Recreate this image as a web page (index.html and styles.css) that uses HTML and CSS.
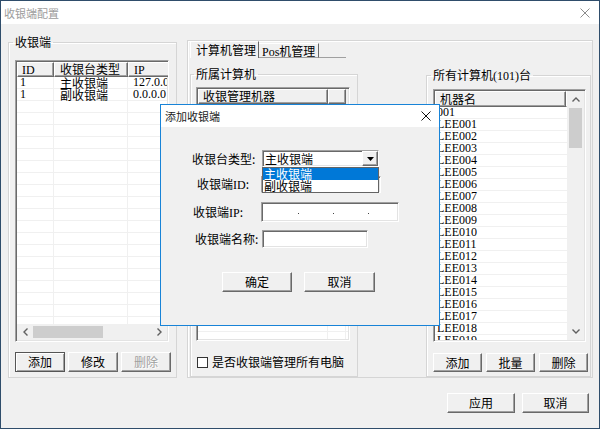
FILE: index.html
```html
<!DOCTYPE html>
<html lang="zh-CN">
<head>
<meta charset="utf-8">
<title>收银端配置</title>
<link rel="stylesheet" href="styles.css">
</head>
<body>
<div class="window">
  <div class="titlebar">
    <span class="title">收银端配置</span>
    <svg class="x-main" width="10" height="10" viewBox="0 0 10 10"><path d="M0.5 0.5L9.5 9.5M9.5 0.5L0.5 9.5" stroke="#8c8c8c" stroke-width="1" fill="none"/></svg>
  </div>
  <div class="client">
    <div class="main">
      <fieldset class="group g-left">
        <legend>收银端</legend>
        <div class="list l-left">
          <div class="lv-head">
            <div class="hc wl1"><span class="lat">ID</span></div>
            <div class="hc wl2">收银台类型</div>
            <div class="hc wl3"><span class="lat">IP</span></div>
          </div>
          <div class="lv-rows">
            <div class="r"><span class="c wl1 lat">1</span><span class="c wl2">主收银端</span><span class="c wl3 lat">127.0.0.1</span></div>
            <div class="r"><span class="c wl1 lat">1</span><span class="c wl2">副收银端</span><span class="c wl3 lat">0.0.0.0</span></div>
            <div class="r"><span class="c wl1"></span><span class="c wl2"></span><span class="c wl3"></span></div>
            <div class="r"><span class="c wl1"></span><span class="c wl2"></span><span class="c wl3"></span></div>
            <div class="r"><span class="c wl1"></span><span class="c wl2"></span><span class="c wl3"></span></div>
            <div class="r"><span class="c wl1"></span><span class="c wl2"></span><span class="c wl3"></span></div>
            <div class="r"><span class="c wl1"></span><span class="c wl2"></span><span class="c wl3"></span></div>
            <div class="r"><span class="c wl1"></span><span class="c wl2"></span><span class="c wl3"></span></div>
            <div class="r"><span class="c wl1"></span><span class="c wl2"></span><span class="c wl3"></span></div>
            <div class="r"><span class="c wl1"></span><span class="c wl2"></span><span class="c wl3"></span></div>
            <div class="r"><span class="c wl1"></span><span class="c wl2"></span><span class="c wl3"></span></div>
            <div class="r"><span class="c wl1"></span><span class="c wl2"></span><span class="c wl3"></span></div>
            <div class="r"><span class="c wl1"></span><span class="c wl2"></span><span class="c wl3"></span></div>
            <div class="r"><span class="c wl1"></span><span class="c wl2"></span><span class="c wl3"></span></div>
            <div class="r"><span class="c wl1"></span><span class="c wl2"></span><span class="c wl3"></span></div>
            <div class="r"><span class="c wl1"></span><span class="c wl2"></span><span class="c wl3"></span></div>
            <div class="r"><span class="c wl1"></span><span class="c wl2"></span><span class="c wl3"></span></div>
            <div class="r"><span class="c wl1"></span><span class="c wl2"></span><span class="c wl3"></span></div>
            <div class="r"><span class="c wl1"></span><span class="c wl2"></span><span class="c wl3"></span></div>
            <div class="r"><span class="c wl1"></span><span class="c wl2"></span><span class="c wl3"></span></div>
            <div class="r"><span class="c wl1"></span><span class="c wl2"></span><span class="c wl3"></span></div>
          </div>
          <div class="hscroll">
            <span class="sa"><svg width="5" height="8" viewBox="0 0 5 8"><path d="M4.5 0.5L1 4L4.5 7.5" stroke="#606060" stroke-width="1.4" fill="none"/></svg></span>
            <span class="hthumb"></span>
            <span class="htrack"></span>
            <span class="sa"><svg width="5" height="8" viewBox="0 0 5 8"><path d="M0.5 0.5L4 4L0.5 7.5" stroke="#606060" stroke-width="1.4" fill="none"/></svg></span>
          </div>
        </div>
        <div class="btnrow">
          <button class="btn btn-def">添加</button>
          <button class="btn">修改</button>
          <button class="btn" disabled>删除</button>
        </div>
      </fieldset>

      <div class="frame">
        <div class="tabs">
          <div class="tab tab-sel">计算机管理</div>
          <div class="tab"><span class="lat">Pos</span>机管理</div>
          <div class="tabline"></div>
        </div>
        <div class="grow">
          <fieldset class="group g-mid">
            <legend>所属计算机</legend>
            <div class="list l-mid">
              <div class="lv-head">
                <div class="hc wm1">收银管理机器</div>
                <div class="hc wm2"></div>
              </div>
              <div class="lv-rows">
                <div class="r"><span class="c wm1"></span><span class="c wm2"></span></div>
                <div class="r"><span class="c wm1"></span><span class="c wm2"></span></div>
                <div class="r"><span class="c wm1"></span><span class="c wm2"></span></div>
                <div class="r"><span class="c wm1"></span><span class="c wm2"></span></div>
                <div class="r"><span class="c wm1"></span><span class="c wm2"></span></div>
                <div class="r"><span class="c wm1"></span><span class="c wm2"></span></div>
                <div class="r"><span class="c wm1"></span><span class="c wm2"></span></div>
                <div class="r"><span class="c wm1"></span><span class="c wm2"></span></div>
                <div class="r"><span class="c wm1"></span><span class="c wm2"></span></div>
                <div class="r"><span class="c wm1"></span><span class="c wm2"></span></div>
                <div class="r"><span class="c wm1"></span><span class="c wm2"></span></div>
                <div class="r"><span class="c wm1"></span><span class="c wm2"></span></div>
                <div class="r"><span class="c wm1"></span><span class="c wm2"></span></div>
                <div class="r"><span class="c wm1"></span><span class="c wm2"></span></div>
                <div class="r"><span class="c wm1"></span><span class="c wm2"></span></div>
                <div class="r"><span class="c wm1"></span><span class="c wm2"></span></div>
                <div class="r"><span class="c wm1"></span><span class="c wm2"></span></div>
                <div class="r"><span class="c wm1"></span><span class="c wm2"></span></div>
                <div class="r"><span class="c wm1"></span><span class="c wm2"></span></div>
                <div class="r"><span class="c wm1"></span><span class="c wm2"></span></div>
              </div>
            </div>
            <label class="chk"><span class="box"></span><span>是否收银端管理所有电脑</span></label>
          </fieldset>

          <fieldset class="group g-right">
            <legend>所有计算机<span class="lat">(101)</span>台</legend>
            <div class="list l-right">
              <div class="lcol">
                <div class="lv-head">
                  <div class="hc wr1">机器名</div>
                  <div class="hc wr2"></div>
                </div>
                <div class="lv-rows">
                  <div class="r"><span class="c wr lat">001</span></div>
                  <div class="r"><span class="c wr lat">LEE001</span></div>
                  <div class="r"><span class="c wr lat">LEE002</span></div>
                  <div class="r"><span class="c wr lat">LEE003</span></div>
                  <div class="r"><span class="c wr lat">LEE004</span></div>
                  <div class="r"><span class="c wr lat">LEE005</span></div>
                  <div class="r"><span class="c wr lat">LEE006</span></div>
                  <div class="r"><span class="c wr lat">LEE007</span></div>
                  <div class="r"><span class="c wr lat">LEE008</span></div>
                  <div class="r"><span class="c wr lat">LEE009</span></div>
                  <div class="r"><span class="c wr lat">LEE010</span></div>
                  <div class="r"><span class="c wr lat">LEE011</span></div>
                  <div class="r"><span class="c wr lat">LEE012</span></div>
                  <div class="r"><span class="c wr lat">LEE013</span></div>
                  <div class="r"><span class="c wr lat">LEE014</span></div>
                  <div class="r"><span class="c wr lat">LEE015</span></div>
                  <div class="r"><span class="c wr lat">LEE016</span></div>
                  <div class="r"><span class="c wr lat">LEE017</span></div>
                  <div class="r"><span class="c wr lat">LEE018</span></div>
                  <div class="r"><span class="c wr lat">LEE019</span></div>
                </div>
              </div>
              <div class="vscroll">
                <span class="va"><svg width="8" height="5" viewBox="0 0 8 5"><path d="M0.5 4.5L4 1L7.5 4.5" stroke="#606060" stroke-width="1.4" fill="none"/></svg></span>
                <span class="vthumb"></span>
                <span class="vtrack"></span>
                <span class="va"><svg width="8" height="5" viewBox="0 0 8 5"><path d="M0.5 0.5L4 4L7.5 0.5" stroke="#606060" stroke-width="1.4" fill="none"/></svg></span>
              </div>
            </div>
            <div class="btnrow btnrow-r">
              <button class="btn">添加</button>
              <button class="btn">批量</button>
              <button class="btn">删除</button>
            </div>
          </fieldset>
        </div>
      </div>
    </div>
    <div class="footer">
      <button class="btn btn-apply">应用</button>
      <button class="btn btn-cancel">取消</button>
    </div>
  </div>

  <div class="dialog">
    <div class="dtitle">
      <span class="dtitle-text">添加收银端</span>
      <svg width="10" height="10" viewBox="0 0 10 10"><path d="M0.5 0.5L9.5 9.5M9.5 0.5L0.5 9.5" stroke="#111" stroke-width="1" fill="none"/></svg>
    </div>
    <div class="dbody">
      <div class="frow fr1">
        <span class="flabel l1">收银台类型:</span>
        <div class="combo">
          <span class="combo-text">主收银端</span>
          <span class="combo-btn"><svg width="7" height="4" viewBox="0 0 7 4"><path d="M0 0H7L3.5 4Z" fill="#000"/></svg></span>
          <div class="dropdown">
            <div class="dd-item dd-sel">主收银端</div>
            <div class="dd-item">副收银端</div>
          </div>
        </div>
      </div>
      <div class="frow fr2">
        <span class="flabel l2">收银端<span class="lat">ID</span>:</span>
        <span class="field f-id"></span>
      </div>
      <div class="frow fr3">
        <span class="flabel l3">收银端<span class="lat">IP</span>:</span>
        <span class="field f-ip"><i class="dot"></i><i class="dot"></i><i class="dot"></i></span>
      </div>
      <div class="frow fr4">
        <span class="flabel l4">收银端名称:</span>
        <span class="field f-name"></span>
      </div>
      <div class="dbtns">
        <button class="btn btn-ok">确定</button>
        <button class="btn btn-dcancel">取消</button>
      </div>
    </div>
  </div>
</div>
</body>
</html>
```

FILE: styles.css
```css
* { box-sizing: border-box; }
html, body { margin: 0; padding: 0; }
body {
  font-family: "Noto Sans CJK SC", "Noto Sans", sans-serif;
  font-size: 12px;
  line-height: 14px;
  color: #000;
  background: #fff;
}
.lat { font-family: "Liberation Serif", serif; font-size: 12px; }

.window {
  position: relative;
  width: 600px;
  height: 429px;
  border: 1px solid #2f4d6b;
  background: #f0f0f0;
  overflow: hidden;
}
.titlebar {
  height: 23px;
  background: #fff;
  display: flex;
  align-items: center;
  justify-content: space-between;
  padding: 0 9px 0 3px;
}
.title { font-size: 11px; color: #9c9c9c; }

.main { display: flex; align-items: flex-start; padding-left: 7px; }

/* group boxes */
.group {
  margin: 0;
  padding: 0;
  min-width: 0;
  border: 1px solid #d5d5d5;
  box-shadow: inset 1px 1px #fff;
}
.group legend { padding: 0 2px; margin-left: -2px; line-height: 14px; }
.g-left { width: 169px; height: 343px; margin-top: 11px; padding-left: 6px; }

/* list views */
.list {
  background: #fff;
  border: 1px solid;
  border-color: #a0a0a0 #fff #fff #a0a0a0;
  box-shadow: inset 1px 1px #696969, inset -1px -1px #e3e3e3;
  padding: 1px;
  display: flex;
  flex-direction: column;
  overflow: hidden;
}
.l-left { width: 154px; height: 282px; margin-top: 11px; }
.lv-head { display: flex; height: 15px; flex: none; background: #f0f0f0; }
.hc {
  flex: none;
  height: 15px;
  border: 1px solid;
  border-color: #fff #696969 #696969 #fff;
  box-shadow: inset -1px -1px #a0a0a0;
  background: #f0f0f0;
  padding-left: 4px;
  line-height: 12px;
  white-space: nowrap;
}
.lv-rows { flex: 1; overflow: hidden; }
.r { display: flex; height: 12px; border-bottom: 1px solid #f0f0f0; line-height: 11px; white-space: nowrap; }
.c { flex: none; border-right: 1px solid #f0f0f0; padding-left: 3px; }
.wl1 { width: 37px; }
.wl2 { width: 74px; padding-left: 5px; }
.wl3 { width: 60px; padding-left: 5px; }
.r .wl2 { padding-left: 6px; }

.hscroll { display: flex; height: 16px; flex: none; background: #f0f0f0; position: relative; }
.sa { width: 16px; flex: none; display: flex; align-items: center; justify-content: center; }
.hthumb { width: 70px; flex: none; background: #cdcdcd; margin: 2px 0; }
.htrack { flex: 1; }

/* buttons */
.btn {
  font-family: inherit;
  font-size: 12px;
  line-height: 16px;
  color: #000;
  height: 20px;
  width: 50px;
  padding: 0;
  background: #f0f0f0;
  border: 1px solid;
  border-color: #fff #696969 #696969 #fff;
  box-shadow: inset -1px -1px #a0a0a0;
}
.btn:disabled { color: #a0a0a0; text-shadow: 1px 1px #fff; }
.btn-def {
  border-color: #555;
  box-shadow: inset 1px 1px #fff, inset -1px -1px #a0a0a0;
}
.btnrow { display: flex; gap: 3px; margin-top: 10px; }

/* right frame with tabs */
.frame {
  margin-left: 10px;
  margin-top: 16px;
  width: 406px;
  height: 338px;
  border: 1px solid #d5d5d5;
  box-shadow: inset 1px 1px #fff;
}
.tabs { display: flex; align-items: flex-end; height: 17px; margin-left: 2px; }
.tab {
  height: 15px;
  width: 60px;
  padding-left: 3px;
  border-top: 1px solid #fff;
  border-right: 1px solid #696969;
  border-bottom: 1px solid #a0a0a0;
  line-height: 13px;
  white-space: nowrap;
}
.tab-sel {
  height: 17px;
  width: 69px;
  padding-left: 5px;
  border-left: 1px solid #fff;
  border-bottom: none;
  line-height: 15px;
}
.tabline { width: 27px; height: 1px; background: #a0a0a0; }

.grow { display: flex; align-items: flex-start; margin-top: 9px; margin-left: 2px; }
.g-mid { width: 168px; height: 310px; padding-left: 5px; }
.g-right { width: 165px; height: 309px; margin-top: 1px; margin-left: 68px; padding-left: 6px; }

.l-mid { width: 154px; height: 254px; margin-top: 6px; }
.wm1 { width: 130px; padding-left: 4px; }
.wm2 { width: 18px; }
.hc.wm1 { padding-left: 4px; }

.chk { display: flex; align-items: center; height: 12px; margin-top: 15px; margin-left: 1px; }
.box { width: 11px; height: 11px; border: 1px solid #333; background: #fff; margin-right: 4px; }

.l-right { width: 153px; height: 253px; margin-top: 6px; flex-direction: row; }
.lcol { flex: 1; display: flex; flex-direction: column; min-width: 0; }
.l-right .lv-head { height: 16px; }
.l-right .hc { height: 16px; line-height: 13px; }
.wr1 { width: 131px; }
.wr2 { flex: 1 !important; border-right: none !important; box-shadow: none !important; }
.wr { width: 100%; padding-left: 2px; border-right: none; }
.vscroll { width: 17px; flex: none; display: flex; flex-direction: column; background: #f0f0f0; }
.va { height: 17px; flex: none; display: flex; align-items: center; justify-content: center; }
.vthumb { height: 40px; width: 13px; margin: 0 auto; background: #cdcdcd; flex: none; }
.vtrack { flex: 1; }
.btnrow-r { margin-top: 11px; }
.btnrow-r .btn { width: 49px; height: 19px; }
.btnrow-r .btn + .btn { margin-left: 1px; }

.footer { display: flex; justify-content: flex-end; gap: 7px; margin-top: 15px; padding-right: 10px; }
.btn-apply { width: 68px; }
.btn-cancel { width: 67px; }

/* modal dialog */
.dialog {
  position: absolute;
  left: 159px;
  top: 103px;
  width: 280px;
  height: 222px;
  border: 1px solid #1883d7;
  background: #f0f0f0;
}
.dtitle {
  height: 22px;
  background: #fff;
  display: flex;
  align-items: center;
  justify-content: space-between;
  padding: 0 8px 0 4px;
}
.dtitle-text { font-size: 11px; color: #222; }
.dbody { padding-top: 23px; }
.frow { display: flex; align-items: center; }
.flabel { width: 100px; flex: none; white-space: nowrap; }
.l1 { padding-left: 31px; }
.l2 { padding-left: 36px; }
.l3 { padding-left: 32px; }
.l4 { padding-left: 34px; }
.fr2 { margin-top: 9px; }
.fr3 { margin-top: 9px; }
.fr4 { margin-top: 8px; }

.field, .combo {
  display: block;
  background: #fff;
  border: 1px solid;
  border-color: #a0a0a0 #fff #fff #a0a0a0;
  box-shadow: inset 1px 1px #696969, inset -1px -1px #e3e3e3;
}
.combo { position: relative; width: 117px; height: 17px; margin-left: 1px; display: flex; align-items: center; }
.combo-text { padding-left: 2px; flex: 1; line-height: 14px; }
.combo-btn {
  width: 16px;
  height: 15px;
  flex: none;
  background: #f0f0f0;
  border: 1px solid;
  border-color: #fff #696969 #696969 #fff;
  box-shadow: inset -1px -1px #a0a0a0;
  display: flex;
  align-items: center;
  justify-content: center;
}
.dropdown {
  position: absolute;
  left: -1px;
  top: 16px;
  width: 117px;
  height: 26px;
  background: #fff;
  border: 1px solid #646464;
}
.dd-item { height: 12px; line-height: 12px; padding-left: 1px; white-space: nowrap; }
.dd-sel { background: #0078d7; color: #fff; }

.f-id { width: 120px; height: 17px; }
.f-ip { width: 138px; height: 20px; display: flex; align-items: center; padding-left: 36px; gap: 34px; }
.dot { display: block; width: 1px; height: 1px; background: #444; margin-top: 2px; }
.f-name { width: 106px; height: 18px; margin-left: 1px; }

.dbtns { display: flex; gap: 12px; padding-left: 61px; margin-top: 24px; }
.btn-ok { width: 70px; }
.btn-dcancel { width: 71px; }
```
